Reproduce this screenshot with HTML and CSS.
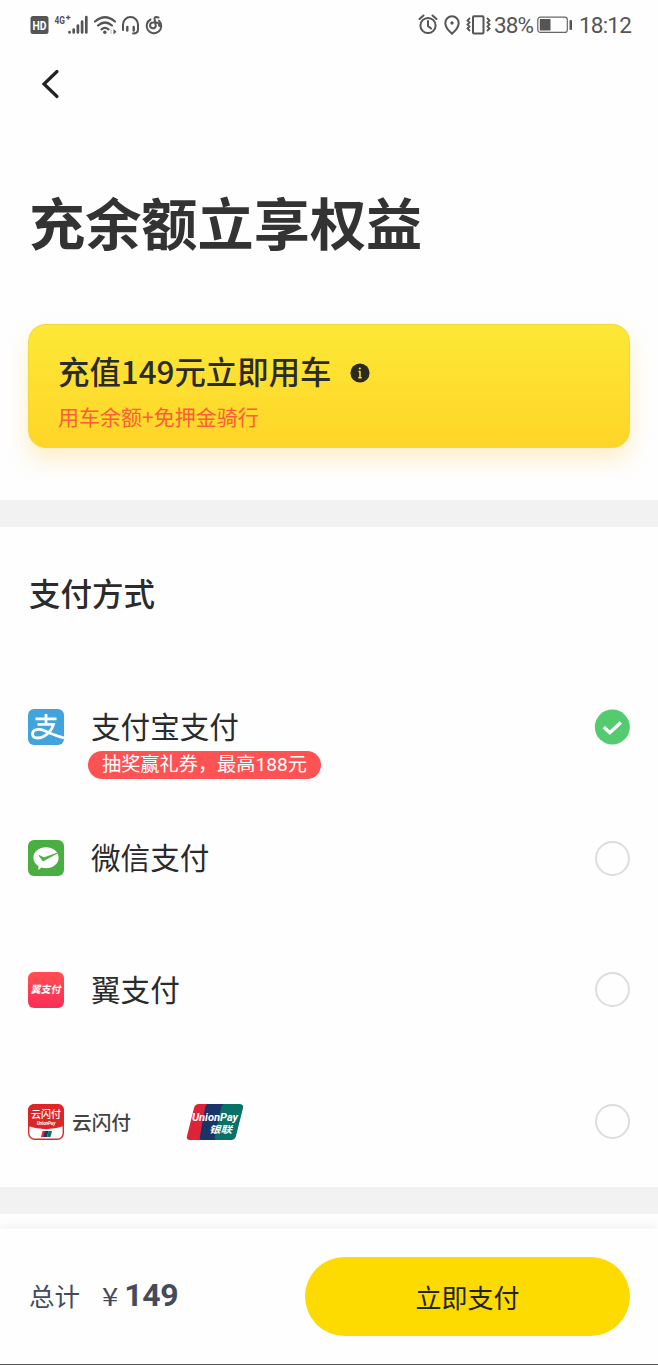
FILE: index.html
```html
<!DOCTYPE html>
<html lang="zh-CN">
<head>
    <meta charset="UTF-8" />
    <meta name="viewport" content="width=device-width, initial-scale=1" />
    <title>充值支付</title>
    <link rel="stylesheet" href="styles.css">
</head>
<body>
    <div class="status-bar">
        <svg class="status-left" width="140" height="30" viewBox="0 0 140 30" fill="none" stroke="#555" stroke-width="2" stroke-linecap="round">
            <rect x="1.500" y="6" width="18" height="18" rx="2.500" fill="#555" stroke="none" />
            <text class="hd-text" x="10.500" y="19.800" text-anchor="middle" textLength="14" lengthAdjust="spacingAndGlyphs">HD</text>
            <text class="net-text" x="25.500" y="14" textLength="10.500" lengthAdjust="spacingAndGlyphs">4G</text>
            <path d="M37.500 7.500h3.500M39.200 5.800v3.400" stroke-width="1.300" />
            <path d="M40.500 22v.5M44.700 19.500v3M48.900 15.500v7M53.100 11.500v11M57.300 7v15.500" stroke-width="2.700" />
            <path d="M66 11.500q10-8.500 20 0M69 15.500q7-6 14 0M72.500 19.300q3.500-2.800 7 0" stroke-width="2.200" />
            <circle cx="75.800" cy="22.300" r="1.700" fill="#555" stroke="none" />
            <path d="M84.500 19l3 2.700-3 2.700z" fill="#555" stroke="none" />
            <path d="M82 20v3.500" stroke="#bbb" stroke-width="1" />
            <path d="M94 20v-5.500a7.500 7.500 0 0 1 15 0v5q0 4-5 4" />
            <path d="M98.300 17v3.500M104.700 17v3.500" stroke-width="2.400" />
            <path d="M129.500 7.500q-3.500-1.500-4 1l1.300 7.500a2.900 2.900 0 1 1-3-3.500q6.500-1 6.500 3.500M121.500 9.500a7.300 7.300 0 1 0 8.500 1.200" stroke-width="2" />
        </svg>
        <div class="status-right">
            <svg width="74" height="24" viewBox="0 0 74 24" fill="none" stroke="#555" stroke-width="2" stroke-linecap="round">
                <circle cx="10" cy="12.500" r="7.600" />
                <path d="M10 8v5l3 2.500M1.500 6l4-3.500M18.500 6l-4-3.500" />
                <path d="M34 3.300a6.700 6.700 0 0 0-6.700 6.700c0 5 6.700 10.700 6.700 10.700s6.700-5.700 6.700-10.700A6.700 6.700 0 0 0 34 3.300z" />
                <circle cx="34" cy="10" r="1.700" fill="#555" stroke="none" />
                <rect x="55" y="3.300" width="10.500" height="17.200" rx="1" />
                <path d="M51.500 5.500l-2 2 2 2-2 2 2 2-2 2 2 2M69.500 5.500l2 2-2 2 2 2-2 2 2 2-2 2" stroke-width="1.800" />
            </svg>
            <span class="percent">38%</span>
            <svg class="battery" width="36" height="18" viewBox="0 0 36 18">
                <rect x=".8" y="1.200" width="29.500" height="15.200" rx="2.500" fill="none" stroke="#666" stroke-width="1.200" />
                <rect x="2.800" y="3" width="10.700" height="11.500" fill="#555" />
                <rect x="32.500" y="4" width="2.500" height="10" rx="1" fill="#555" />
            </svg>
            <span class="time">18:12</span>
        </div>
    </div>

    <div class="nav">
        <svg width="20" height="30" viewBox="0 0 20 30" fill="none" stroke="#222" stroke-width="3.200" stroke-linecap="round">
            <path d="M17 2.500L4 15l13 12.500" />
        </svg>
    </div>

    <h1 class="title">充余额立享权益</h1>

    <div class="card">
        <div class="card-title">
            <span>充值149元立即用车</span>
            <svg class="info" width="20" height="20" viewBox="0 0 20 20">
                <circle cx="10" cy="10" r="9.600" fill="#2b2b22" />
                <path d="M10 8v7M8.500 8.500h1.500M8.300 14.800h3.400" stroke="#fde034" stroke-width="1.500" />
                <circle cx="9.800" cy="5.500" r="1.100" fill="#fde034" />
            </svg>
        </div>
        <div class="card-desc">用车余额+免押金骑行</div>
    </div>

    <div class="divider"></div>

    <div class="pay">
        <h2 class="pay-title">支付方式</h2>

        <div class="pay-row">
            <svg class="pay-icon" width="36" height="36" viewBox="0 0 36 36">
                <rect width="36" height="36" rx="6" fill="#42a4dc" />
                <path d="M7.500 9.800h21M18 5v10M9.500 15.300h16q-2.500 8-9.500 12c-5 2.700-11.500 2.300-11.500-2.300 0-5 7-5.500 12-3.300q7 3.500 19.500 7.300" fill="none" stroke="#fff" stroke-width="2.800" />
            </svg>
            <div class="pay-name">
                支付宝支付
                <span class="badge">抽奖赢礼券，最高188元</span>
            </div>
            <svg class="radio" width="36" height="36" viewBox="0 0 36 36">
                <circle cx="18.300" cy="18" r="17.500" fill="#53cb6e" />
                <path d="M9.800 18l6 5.800 11-10.300" fill="none" stroke="#fff" stroke-width="3.300" />
            </svg>
        </div>

        <div class="pay-row">
            <svg class="pay-icon" width="36" height="36" viewBox="0 0 36 36">
                <rect width="36" height="36" rx="6" fill="#4bae40" />
                <path d="M18 7.300c7 0 12.600 4.600 12.600 10.500S25 28.300 18 28.300q-2.300 0-4.500-.7L10.300 30l.3-3.700C7.300 24.300 5.400 21.300 5.400 17.800 5.400 11.900 11 7.300 18 7.300z" fill="#fff" />
                <path d="M11 15.500l4 5.500L29.500 13l-13.500 4.800z" fill="#4bae40" stroke="#4bae40" stroke-width=".8" />
            </svg>
            <div class="pay-name">微信支付</div>
            <span class="radio empty"></span>
        </div>

        <div class="pay-row">
            <svg class="pay-icon" width="36" height="36" viewBox="0 0 36 36">
                <defs>
                    <linearGradient id="wing" x1="0" y1="0" x2="0" y2="1">
                        <stop offset="0" stop-color="#ff5052" />
                        <stop offset="1" stop-color="#fb2d58" />
                    </linearGradient>
                </defs>
                <rect width="36" height="36" rx="6" fill="url(#wing)" />
                <text class="wing-text" x="17.500" y="21.500" text-anchor="middle" transform="translate(4 0) skewX(-10)">翼支付</text>
            </svg>
            <div class="pay-name">翼支付</div>
            <span class="radio empty"></span>
        </div>

        <div class="pay-row">
            <svg class="pay-icon quick-icon" width="36" height="36" viewBox="0 0 36 36">
                <rect x=".7" y=".7" width="34.600" height="34.600" rx="6" fill="#fff" stroke="#d92b2b" stroke-width="1.400" />
                <path d="M0 22V6a6 6 0 0 1 6-6h24a6 6 0 0 1 6 6v16Q18 28.500 0 22z" fill="#dd2626" />
                <text class="quick-text" x="18" y="14" text-anchor="middle">云闪付</text>
                <text class="quick-small" x="18" y="21" text-anchor="middle">UnionPay</text>
                <path d="M14.500 27h3.500l-1.500 6h-3.500z" fill="#d92b2b" />
                <path d="M17 27h3.500l-1.500 6h-3.500z" fill="#173a6e" />
                <path d="M20.500 27h3.500l-1.500 6h-3.500z" fill="#0a706b" />
            </svg>
            <div class="quick-name">云闪付</div>
            <svg class="union" width="58" height="36" viewBox="0 0 58 36">
                <path d="M13 0H24L16 36H4Q0 36 1 32L8 4Q9 0 13 0z" fill="#dc2438" />
                <path d="M22 0H40L31 36H16Q13 36 14 32L19 4Q20 0 22 0z" fill="#1b3468" />
                <path d="M39 0H53Q58 0 57 4L50 32Q49 36 45 36H31Q28 36 29 32L35 4Q36 0 39 0z" fill="#087267" />
                <text class="union-text" x="6" y="17" textLength="46" lengthAdjust="spacingAndGlyphs">UnionPay</text>
                <text class="union-cn" x="23" y="28.500" textLength="23" lengthAdjust="spacingAndGlyphs">银联</text>
            </svg>
            <span class="radio empty"></span>
        </div>
    </div>

    <div class="divider"></div>

    <div class="footer">
        <div class="total">
            <span>总计</span>
            <span class="yen">¥</span>
            <span class="amount">149</span>
        </div>
        <button class="pay-btn">立即支付</button>
    </div>
</body>
</html>
```
FILE: styles.css
```css
* {
    box-sizing: border-box;
}
body {
    margin: 0;
    height: 1365px;
    display: flex;
    flex-direction: column;
    background-color: #fefefe;
    color: #2b2b2b;
    font-family: "Noto Sans CJK SC", sans-serif;
    overflow: hidden;
}
.status-bar {
    display: flex;
    justify-content: space-between;
    align-items: center;
    height: 50px;
    padding: 0 27px 0 29px;
    color: #555;
    font-family: Roboto, sans-serif;
    font-size: 22.5px;
}
.status-right {
    display: flex;
    align-items: center;
}
.hd-text {
    fill: #fff;
    stroke: none;
    font: bold 13px Roboto, sans-serif;
}
.net-text {
    fill: #555;
    stroke: none;
    font: bold 11.5px Roboto, sans-serif;
}
.percent {
    width: 39px;
    margin-left: 2px;
    letter-spacing: -0.9px;
}
.battery {
    margin-left: 4px;
}
.time {
    width: 52px;
    margin-left: 6px;
    letter-spacing: -0.8px;
}
.nav {
    height: 68px;
    padding: 19px 0 0 40px;
}
.title {
    margin: 63px 0 0 29px;
    font-size: 56.2px;
    line-height: 80px;
    font-weight: bold;
    color: #333;
}
.card {
    height: 124px;
    margin: 63px 28px 52px;
    padding: 24px 29px 0;
    border: 1px solid #f0d83a;
    border-bottom-color: #fed629;
    border-radius: 18px;
    background: linear-gradient(#fde837, #fed527);
    box-shadow: 0 12px 22px rgba(255, 190, 40, 0.25);
}
.card-title {
    display: flex;
    align-items: center;
    gap: 19px;
    font-size: 31.4px;
    line-height: 43px;
    font-weight: 500;
}
.info {
    margin-top: 4px;
}
.card-desc {
    margin-top: 8px;
    font-size: 21px;
    line-height: 32px;
    color: #ff5c3c;
}
.divider {
    flex: none;
    height: 27px;
    background-color: #f2f2f2;
}
.pay {
    height: 660px;
    padding: 41px 28px 0;
}
.pay-title {
    margin: 0 0 45px 1px;
    font-size: 31.5px;
    line-height: 48px;
    font-weight: 500;
}
.pay-row {
    display: flex;
    align-items: center;
    height: 131.5px;
}
.pay-icon {
    flex: none;
}
.pay-name {
    position: relative;
    margin: -2px 0 0 27px;
    font-size: 29.6px;
    line-height: 44px;
}
.badge {
    position: absolute;
    top: 47px;
    left: -3px;
    padding: 0 14px;
    border-radius: 14px;
    background-color: #ff5353;
    color: #fff;
    font-family: Roboto, "Noto Sans CJK SC", sans-serif;
    font-size: 19.2px;
    line-height: 28px;
    white-space: nowrap;
}
.radio {
    flex: none;
    margin-left: auto;
}
.empty {
    width: 35px;
    height: 35px;
    border: 2px solid #ddd;
    border-radius: 50%;
}
.wing-text {
    fill: #fff;
    font-size: 10px;
    font-weight: bold;
}
.quick-icon {
    margin-top: 1px;
}
.quick-text {
    fill: #fff;
    font-size: 10px;
    font-weight: 500;
}
.quick-small {
    fill: #fff;
    font: italic bold 4.5px Roboto, sans-serif;
}
.quick-name {
    margin-left: 8px;
    font-size: 19.7px;
    font-weight: 500;
    color: #444;
}
.union {
    margin: 1px 0 0 55px;
}
.union-text {
    fill: #fff;
    font: italic bold 10.5px Roboto, sans-serif;
}
.union-cn {
    fill: #fff;
    font-size: 9.5px;
    font-style: italic;
    font-weight: bold;
}
.footer {
    display: flex;
    justify-content: space-between;
    align-items: center;
    height: 136px;
    margin-top: auto;
    padding: 0 28px;
    border-bottom: 1px solid #555;
    background-color: #fefefe;
    box-shadow: 0 -2px 12px rgba(0, 0, 0, 0.06);
}
.total {
    display: flex;
    align-items: baseline;
    margin-top: -4px;
    padding-left: 1px;
    font-size: 25.5px;
    color: #454b5b;
}
.yen {
    margin-left: 23px;
    transform: scaleX(1.15);
}
.amount {
    margin-left: 7px;
    font-family: Roboto, sans-serif;
    font-size: 32px;
    font-weight: bold;
    letter-spacing: -0.3px;
}
.pay-btn {
    width: 325px;
    height: 79px;
    padding: 0;
    border: none;
    border-radius: 40px;
    background-color: #fddb00;
    color: #222;
    font-family: inherit;
    font-size: 26px;
    cursor: pointer;
}
```
